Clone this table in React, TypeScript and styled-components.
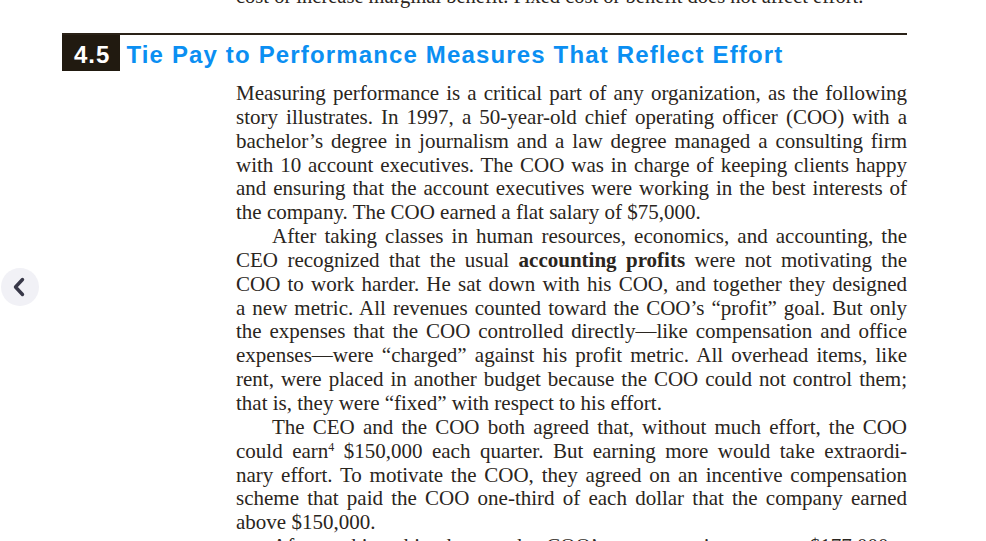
import React from "react";
import styled, { createGlobalStyle } from "styled-components";

const Global = createGlobalStyle`
  html, body { margin: 0; padding: 0; background: #ffffff; }
  body { overflow: hidden; }
  #root { width: 986px; height: 541px; position: relative; overflow: hidden; }
`;

const Page = styled.div`
  width: 986px;
  height: 541px;
  padding-left: 62px;
  box-sizing: border-box;
  overflow: hidden;
`;

const Column = styled.div`
  width: 845px;
  display: flex;
  flex-direction: column;
`;

const CutLine = styled.div`
  margin-top: -16px;
  margin-left: 174px;
  width: 640px;
  font-family: "Liberation Serif", serif;
  font-size: 20.5px;
  line-height: 24px;
  color: #2a2520;
  white-space: nowrap;
`;

const HeadingRow = styled.div`
  margin-top: 25px;
  border-top: 2px solid #2a2218;
  display: flex;
  align-items: stretch;
  height: 36px;
`;

const NumberBox = styled.div`
  background: #211a10;
  color: #ffffff;
  font-family: "Liberation Sans", Arial, sans-serif;
  font-weight: 700;
  font-size: 24px;
  letter-spacing: 1px;
  line-height: 40px;
  padding: 0 10px 0 12px;
`;

const Title = styled.h2`
  margin: 0 0 0 6px;
  color: #0b8ff2;
  font-family: "Liberation Sans", Arial, sans-serif;
  font-weight: 700;
  font-size: 24px;
  letter-spacing: 1.15px;
  line-height: 40px;
  white-space: nowrap;
`;

const Body = styled.div`
  margin-top: 11px;
  margin-left: 174px;
  width: 671px;
  font-family: "Liberation Serif", "Times New Roman", serif;
  font-size: 21px;
  line-height: 23.85px;
  color: #2a2520;
`;

const Line = styled.span<{ $last?: boolean; $indent?: boolean }>`
  display: block;
  text-align: ${(p) => (p.$last ? "left" : "justify")};
  text-align-last: ${(p) => (p.$last ? "left" : "justify")};
  padding-left: ${(p) => (p.$indent ? "36px" : "0")};
  white-space: normal;
`;

const Bold = styled.b`
  font-weight: 700;
`;

const Sup = styled.sup`
  font-size: 12px;
  line-height: 0;
  vertical-align: 7px;
`;

const BackButton = styled.button`
  position: absolute;
  left: 1px;
  top: 268px;
  width: 38px;
  height: 38px;
  border-radius: 50%;
  border: none;
  padding: 0;
  background: #f1f1f6;
  display: flex;
  align-items: center;
  justify-content: center;
  cursor: pointer;
`;

type L = { t: React.ReactNode; last?: boolean; indent?: boolean };

const lines: L[] = [
  { t: "Measuring performance is a critical part of any organization, as the following" },
  { t: "story illustrates. In 1997, a 50-year-old chief operating officer (COO) with a" },
  { t: "bachelor’s degree in journalism and a law degree managed a consulting firm" },
  { t: "with 10 account executives. The COO was in charge of keeping clients happy" },
  { t: "and ensuring that the account executives were working in the best interests of" },
  { t: "the company. The COO earned a flat salary of $75,000.", last: true },
  { t: "After taking classes in human resources, economics, and accounting, the", indent: true },
  {
    t: (
      <>
        CEO recognized that the usual <Bold>accounting profits</Bold> were not motivating the
      </>
    ),
  },
  { t: "COO to work harder. He sat down with his COO, and together they designed" },
  { t: "a new metric. All revenues counted toward the COO’s “profit” goal. But only" },
  { t: "the expenses that the COO controlled directly—like compensation and office" },
  { t: "expenses—were “charged” against his profit metric. All overhead items, like" },
  { t: "rent, were placed in another budget because the COO could not control them;" },
  { t: "that is, they were “fixed” with respect to his effort.", last: true },
  { t: "The CEO and the COO both agreed that, without much effort, the COO", indent: true },
  {
    t: (
      <>
        could earn<Sup>4</Sup> $150,000 each quarter. But earning more would take extraordi-
      </>
    ),
  },
  { t: "nary effort. To motivate the COO, they agreed on an incentive compensation" },
  { t: "scheme that paid the COO one-third of each dollar that the company earned" },
  { t: "above $150,000.", last: true },
  { t: "After making this change, the COO’s compensation rose to $177,000 a", indent: true },
];

export default function App() {
  return (
    <>
      <Global />
      <Page>
        <Column>
          <CutLine>cost or increase marginal benefit. Fixed cost or benefit does not affect effort.</CutLine>
          <HeadingRow>
            <NumberBox>4.5</NumberBox>
            <Title>Tie Pay to Performance Measures That Reflect Effort</Title>
          </HeadingRow>
          <Body>
            {lines.map((l, i) => (
              <Line key={i} $last={l.last} $indent={l.indent}>
                {l.t}
              </Line>
            ))}
          </Body>
        </Column>
      </Page>
      <BackButton aria-label="Previous">
        <svg width="38" height="38" viewBox="0 0 38 38">
          <path
            d="M21.5 11.5 L14.5 19 L21.5 26.5"
            fill="none"
            stroke="#383848"
            strokeWidth="3.4"
            strokeLinecap="round"
            strokeLinejoin="round"
          />
        </svg>
      </BackButton>
    </>
  );
}
